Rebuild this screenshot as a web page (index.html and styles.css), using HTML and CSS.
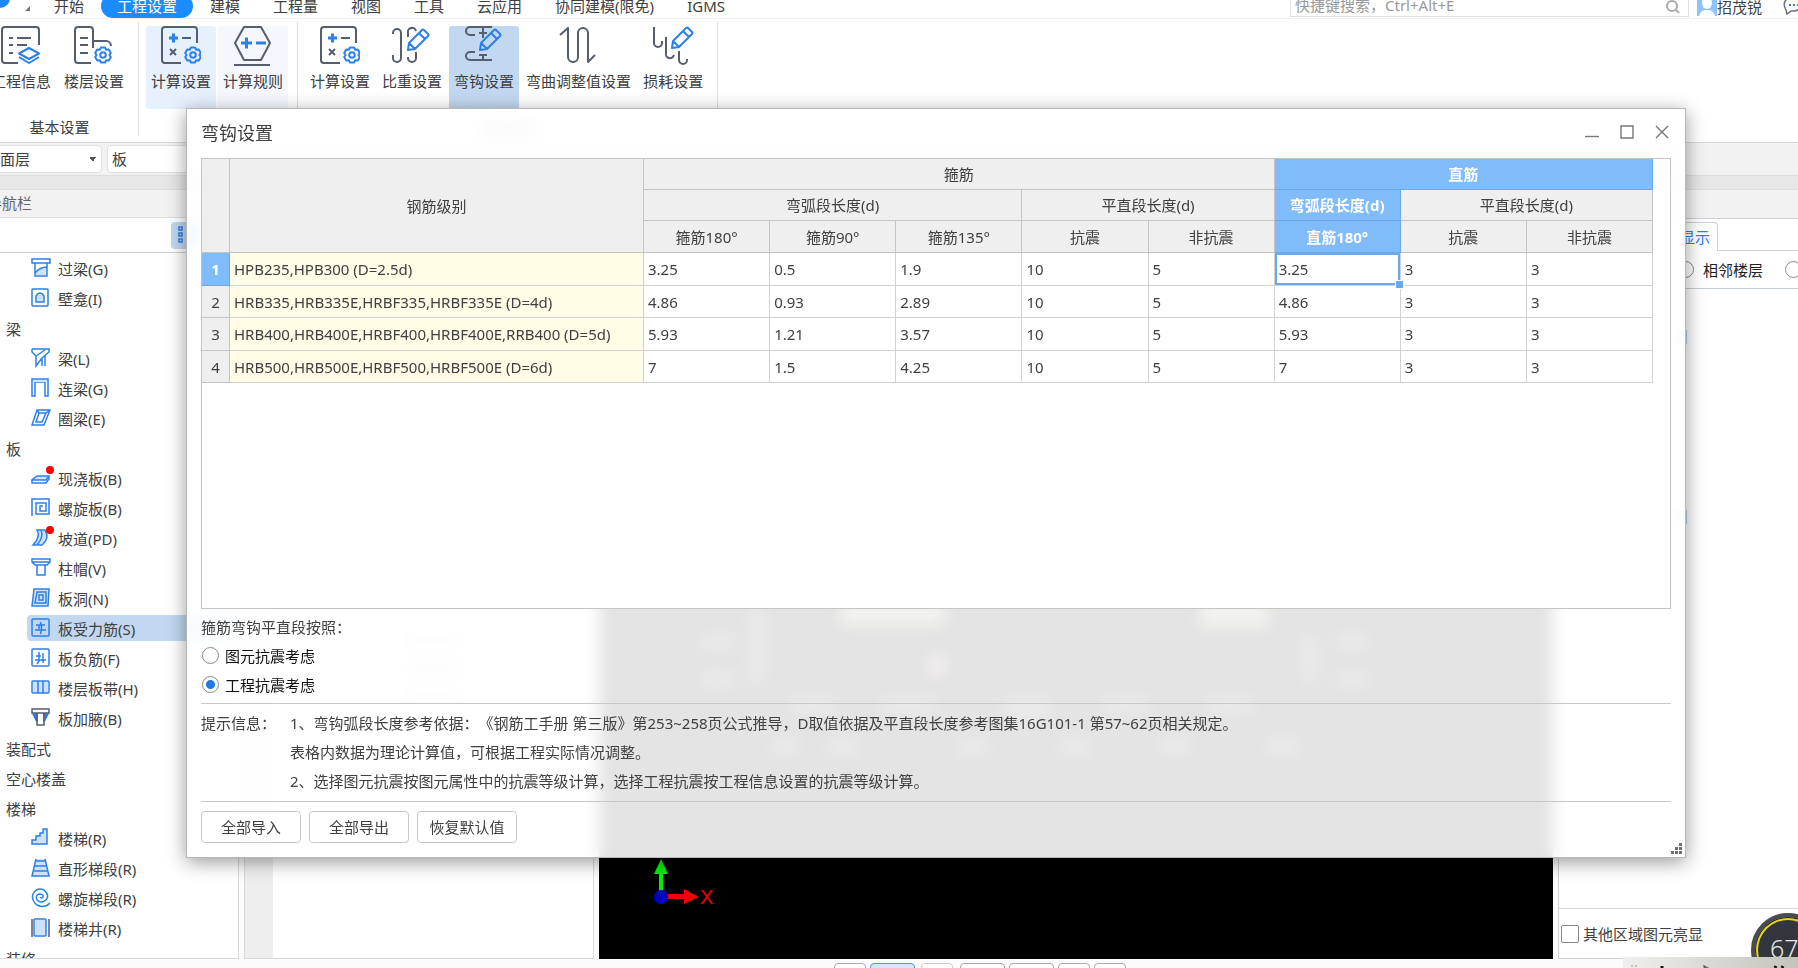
FILE: index.html
```html
<!DOCTYPE html>
<html lang="zh-CN">
<head>
<meta charset="utf-8">
<title>弯钩设置</title>
<link rel="stylesheet" href="styles.css">
</head>
<body>
<svg class="defs" aria-hidden="true">
  <symbol id="gear" viewBox="-9 -9 18 18"><path d="M-2-7.5h4l1.2 2.3 2.6-.2 2 3.4-1.4 2 1.4 2-2 3.4-2.6-.2-1.2 2.3h-4l-1.2-2.3-2.6.2-2-3.4 1.4-2-1.4-2 2-3.4 2.6.2z"/><circle r="2.8"/></symbol>
  <symbol id="pencil" viewBox="0 0 24 24"><path d="M2 22l1-7L16 2q1-1 2 0l4 4q1 1 0 2L9 21zM13 5l6 6M3 15l6 6"/></symbol>
  <symbol id="calc" viewBox="0 0 40 40"><path class="k" d="M36 17V4a3 3 0 0 0-3-3H4a3 3 0 0 0-3 3v30a3 3 0 0 0 3 3h16M21 12h9M9 23l6 6M15 23l-6 6"/><path class="b thick" d="M8 12h9M12.500 7.500v9"/><use class="b" href="#gear" x="23" y="20" width="18" height="18"/></symbol>
</svg>
<div class="app">
  <header class="tabbar">
    <span class="logo"></span><span class="tri"></span>
    <nav class="tabs">
      <a href="#">开始</a><a href="#" class="on">工程设置</a><a href="#">建模</a><a href="#">工程量</a><a href="#">视图</a><a href="#">工具</a><a href="#">云应用</a><a href="#">协同建模(限免)</a><a href="#">IGMS</a>
    </nav>
    <div class="search">
      <input type="text" aria-label="搜索" placeholder="快捷键搜索，Ctrl+Alt+E">
      <svg width="14" height="14" viewBox="0 0 14 14"><circle cx="6" cy="6" r="5"/><path d="M10 10l3 3"/></svg>
    </div>
    <div class="user">
      <svg width="20" height="20" viewBox="0 0 20 20"><rect width="20" height="20" fill="#8fc3fb"/><ellipse cx="10" cy="7" rx="5" ry="6" fill="#fff"/><path d="M2 20q1-5 6-6h4q5 1 6 6z" fill="#fff"/></svg><span>招茂锐</span>
    </div>
    <svg class="chat" width="20" height="20" viewBox="0 0 20 20"><path d="M3 15q-4-7 1-11 7-5 14 1 3 8-6 11H8l-4 3z" fill="none" stroke="#6a7080" stroke-width="1.500"/><path d="M6 10h2M10 10h2M14 10h2" stroke="#4b78c8" stroke-width="2"/></svg>
  </header>

  <section class="ribbon">
    <div class="group first">
      <div class="btns">
        <button><svg class="ic" viewBox="0 0 40 40"><path class="k" d="M38 19V4a3 3 0 0 0-3-3H4a3 3 0 0 0-3 3v30a3 3 0 0 0 3 3h13M8 12h4M16 12h14M8 19h4M16 19h10M8 27h4"/><path class="b" d="M28 22l10 5.500-10 5.500-10-5.500zM18 31l10 6 10-6"/></svg>工程信息</button>
        <button><svg class="ic" viewBox="0 0 40 40"><path class="k" d="M17 37H4a3 3 0 0 1-3-3V4a3 3 0 0 1 3-3h12a3 3 0 0 1 3 3v18M19 15h13a5 5 0 0 1 5 5M6 12h8M6 19h8M6 27h8"/><use class="b" href="#gear" x="20" y="20" width="18" height="18"/></svg>楼层设置</button>
      </div>
      <div class="caption">基本设置</div>
    </div>
    <div class="group">
      <div class="btns">
        <button class="soft"><svg class="ic"><use href="#calc"/></svg>计算设置</button>
        <button class="softer"><svg class="ic" viewBox="0 0 40 40"><path class="k" d="M11 1h17l9 16-9 17H11L2 17zM1 39h36"/><path class="b thick" d="M8 17h11M13.500 11.500v11M23 17h10"/></svg>计算规则</button>
      </div>
    </div>
    <div class="group">
      <div class="btns">
        <button><svg class="ic"><use href="#calc"/></svg>计算设置</button>
        <button><svg class="ic" viewBox="0 0 40 40"><path class="k" d="M1 8V7a4 4 0 0 1 8 0v25a4 4 0 0 1-8 0v-3M16 11V7a4 4 0 0 1 8-2M24 26v6a4 4 0 0 1-8 0v-1"/><use class="b" href="#pencil" x="14" y="2" width="24" height="24"/></svg>比重设置</button>
        <button class="on"><svg class="ic" viewBox="0 0 40 40"><path class="k" d="M28 1H6a4 4 0 0 0 0 8h5M28 34H6a4 4 0 0 1 0-8h5M19 1v11M15 7h8M19 34v-5M15 29h8"/><use class="b" href="#pencil" x="14" y="2" width="24" height="24"/></svg>弯钩设置</button>
        <button><svg class="ic" viewBox="0 0 40 40"><path class="k" d="M1 9l8-7v29a5 5 0 0 0 10 0V7a5 5 0 0 1 10 0v29l7-7"/></svg>弯曲调整值设置</button>
        <button><svg class="ic" viewBox="0 0 40 40"><path class="k" d="M1 1v16a4 4 0 0 0 8 0v-2M13 11v16a4 4 0 0 0 8 2M26 25v9a4 4 0 0 0 8 0v-1"/><use class="b" href="#pencil" x="17" y="0" width="24" height="24"/></svg>损耗设置</button>
      </div>
      <div class="smudge"></div>
    </div>
  </section>

  <section class="toolbar">
    <select class="sel floor" aria-label="楼层"><option>屋面层</option></select>
    <select class="sel kind" aria-label="构件类型"><option>板</option></select>
  </section>
  <div class="strip"></div>

  <main class="work">
    <aside class="nav">
      <h2 class="navhead">导航栏</h2>
      <div class="navtools"><button class="viewbtn" aria-label="列表"><svg width="24" height="18" viewBox="0 0 24 18"><path d="M1 1h3v3H1zM1 7h3v3H1zM1 13h3v3H1zM8 2.500h12M8 8.500h12M8 14.500h12" fill="none" stroke="#2b80ea" stroke-width="1.500"/></svg></button></div>
      <ul class="list">
        <li><svg viewBox="0 0 20 20"><path class="f" d="M4 16q5-7 12-7v8H4z"/><path d="M1 1h18v4H1zM4 5v13h12V5M4 15q5-6 12-6"/></svg>过梁(G)</li>
        <li><svg viewBox="0 0 20 20"><rect x="1" y="1" width="16" height="17" rx="1"/><path class="f" d="M5 14V8q4-6 8 0v6z"/><path d="M5 14V8q4-6 8 0v6z"/></svg>壁龛(I)</li>
        <li class="cat">梁</li>
        <li><svg viewBox="0 0 20 20"><path d="M1 1h17v3l-7 6v8M1 1v3l4 4v10l6-8M5 8l9-6M14 8v10"/></svg>梁(L)</li>
        <li><svg viewBox="0 0 20 20"><path d="M1 18V1h16v17h-3V4H4v14z"/><path class="f" d="M2 2h14v2H2z"/></svg>连梁(G)</li>
        <li><svg viewBox="0 0 20 20"><path d="M6 2h13l-6 15H1zM8 5h7l-4 9H5zM6 2l2 3M19 2l-4 3"/></svg>圈梁(E)</li>
        <li class="cat">板</li>
        <li class="dot"><svg viewBox="0 0 20 20"><path class="f" d="M6 8h12l-3 4H1z"/><path d="M6 8h12l-3 4H1zM1 12v3h14l3-4V8"/></svg>现浇板(B)</li>
        <li><svg viewBox="0 0 20 20"><path d="M1 18V1h17v15H5V5h10v8H9V8h3"/></svg>螺旋板(B)</li>
        <li class="dot"><svg viewBox="0 0 20 20"><path class="f" d="M6 2h9q4 8-3 15H2q7-8 4-15z"/><path d="M6 2q4 7-4 15h4q7-8 4-15zM10 2h4q5 8-3 15H7"/></svg>坡道(PD)</li>
        <li><svg viewBox="0 0 20 20"><path d="M1 1h18v3l-3 3H4L1 4zM1 4h18M6 7h8v10H6z"/></svg>柱帽(V)</li>
        <li><svg viewBox="0 0 20 20"><path class="f" d="M3 1h15l-1 16H1z"/><path d="M3 1h15l-1 17H1zM6 4h9v11H4zM8 7h4v5H8z"/></svg>板洞(N)</li>
        <li class="sel-row"><svg viewBox="0 0 20 20"><rect x="1" y="1" width="17" height="17" rx="1"/><path d="M5 7h9M4 12h11M8 7v5M9.500 4q2 6 0 12"/></svg>板受力筋(S)</li>
        <li><svg viewBox="0 0 20 20"><rect x="1" y="1" width="17" height="17" rx="1"/><path d="M5 8h5M4 12h11M8 4v9l-2 3M12 5v10"/></svg>板负筋(F)</li>
        <li><svg viewBox="0 0 20 20"><rect class="f" x="2" y="4" width="15" height="11"/><rect x="1" y="3" width="17" height="12" rx="1"/><path d="M7 3v12M12 3v12"/></svg>楼层板带(H)</li>
        <li><svg viewBox="0 0 20 20"><path fill="#2b80ea" d="M2 6h4v8zM17 6h-4v8z"/><path class="g" d="M1 1h17v4H1zM6 5h7v12H6z"/></svg>板加腋(B)</li>
        <li class="cat">装配式</li>
        <li class="cat">空心楼盖</li>
        <li class="cat">楼梯</li>
        <li><svg viewBox="0 0 20 20"><path class="f" d="M1 16v-4h4V8h4V5h3V1h4v15z"/><path d="M1 16v-4h4V8h4V5h3V1h4v15z"/></svg>楼梯(R)</li>
        <li><svg viewBox="0 0 20 20"><path class="f" d="M5 1h9l4 17H1z"/><path d="M5 1L1 18h17L14 1M5 3h10M4 8h11M3 13h13"/></svg>直形梯段(R)</li>
        <li><svg viewBox="0 0 20 20"><path d="M19 15q-6 6-13 2-6-5-4-11 4-7 11-4 6 5 2 10-5 4-9 0-2-5 2-6 5 0 4 3-2 2-3 0"/></svg>螺旋梯段(R)</li>
        <li><svg viewBox="0 0 20 20"><rect class="f" x="4" y="2" width="11" height="15"/><rect x="3" y="1" width="12" height="17" rx="1"/><path class="g" d="M1 1v18M18 1v18"/></svg>楼梯井(R)</li>
        <li class="cat">装修</li>
      </ul>
    </aside>
    <section class="props"><div class="gutter"></div><div class="propbody"><i></i><i></i><i></i></div></section>
    <section class="canvas">
      <svg class="scene" width="956" height="360" viewBox="599 599 956 360">
        <g fill="#8c8c78"><rect x="840" y="599" width="105" height="26"/><rect x="1200" y="599" width="68" height="28"/></g>
        <rect x="930" y="655" width="14" height="20" fill="#c080a0"/>
        <g fill="#484848"><rect x="700" y="635" width="34" height="14"/><rect x="700" y="672" width="34" height="14"/><rect x="750" y="605" width="14" height="80"/><rect x="1303" y="635" width="14" height="48"/><rect x="1336" y="635" width="32" height="14"/><rect x="1336" y="672" width="32" height="14"/>
        <rect x="790" y="698" width="46" height="14"/><rect x="880" y="698" width="56" height="14"/><rect x="1005" y="698" width="44" height="22"/><rect x="1102" y="698" width="48" height="14"/><rect x="1206" y="698" width="48" height="14"/>
        <rect x="772" y="738" width="26" height="16"/><rect x="828" y="738" width="30" height="16"/><rect x="958" y="738" width="30" height="16"/><rect x="1060" y="738" width="30" height="16"/><rect x="1160" y="738" width="30" height="16"/><rect x="1267" y="738" width="32" height="16"/></g>
        <path d="M659 891v-17h-5l7-15 7 15h-5v17z" fill="#00f000"/>
        <path d="M667 894h17v-5l15 8-15 7v-5h-17z" fill="#f00000"/>
        <circle cx="661" cy="897" r="7" fill="#0000c0"/>
        <text x="700" y="904" fill="#f00000">X</text>
      </svg>
    </section>
    <aside class="side">
      <div class="sidetabs"><span>显示</span></div>
      <div class="sideopts"><label><input type="radio" name="fl" class="radio">相邻楼层</label><label><input type="radio" name="fl" class="radio" aria-label="全部楼层"></label></div>
      <div class="sidebody"><i></i><i></i></div>
      <label class="sidefoot"><input type="checkbox" class="check">其他区域图元亮显</label>
    </aside>
  </main>
  <footer class="status"><button></button><button class="w on"></button><button class="dim"></button><button class="w"></button><button class="w"></button><button></button><button></button></footer>

  <div class="gauge">67</div>
  <div class="peek"><svg width="175" height="11" viewBox="0 0 175 11"><path d="M8 9h2M12 9h2M80 8l6 3h-5z" fill="#222" stroke="#999"/><path d="M39 9v2M153 9l-1 2M160 9l-1 2" stroke="#111" stroke-width="3"/></svg></div>

  <div class="dialog" role="dialog" aria-labelledby="dlg">
    <div class="titlebar">
      <h1 id="dlg">弯钩设置</h1>
      <div class="winbtns">
        <button aria-label="最小化"><svg viewBox="0 0 14 14"><path d="M0 11.500h14"/></svg></button>
        <button aria-label="最大化"><svg viewBox="0 0 14 14"><path d="M1 1h12v12H1z"/></svg></button>
        <button aria-label="关闭"><svg viewBox="0 0 14 14"><path d="M1 1l12 12M13 1L1 13"/></svg></button>
      </div>
    </div>
    <div class="frame">
      <table class="grid">
        <colgroup><col class="c-no"><col class="c-name"><col span="8"></colgroup>
        <thead>
          <tr><th rowspan="3"></th><th rowspan="3">钢筋级别</th><th colspan="5">箍筋</th><th colspan="3" class="hot">直筋</th></tr>
          <tr><th colspan="3">弯弧段长度(d)</th><th colspan="2">平直段长度(d)</th><th class="hot">弯弧段长度(d)</th><th colspan="2">平直段长度(d)</th></tr>
          <tr><th>箍筋180°</th><th>箍筋90°</th><th>箍筋135°</th><th>抗震</th><th>非抗震</th><th class="hot">直筋180°</th><th>抗震</th><th>非抗震</th></tr>
        </thead>
        <tbody>
          <tr><th class="hot">1</th><td>HPB235,HPB300 (D=2.5d)</td><td>3.25</td><td>0.5</td><td>1.9</td><td>10</td><td>5</td><td class="active">3.25</td><td>3</td><td>3</td></tr>
          <tr><th>2</th><td>HRB335,HRB335E,HRBF335,HRBF335E (D=4d)</td><td>4.86</td><td>0.93</td><td>2.89</td><td>10</td><td>5</td><td>4.86</td><td>3</td><td>3</td></tr>
          <tr><th>3</th><td>HRB400,HRB400E,HRBF400,HRBF400E,RRB400 (D=5d)</td><td>5.93</td><td>1.21</td><td>3.57</td><td>10</td><td>5</td><td>5.93</td><td>3</td><td>3</td></tr>
          <tr><th>4</th><td>HRB500,HRB500E,HRBF500,HRBF500E (D=6d)</td><td>7</td><td>1.5</td><td>4.25</td><td>10</td><td>5</td><td>7</td><td>3</td><td>3</td></tr>
        </tbody>
      </table>
    </div>
    <div class="options" role="radiogroup" aria-labelledby="optl">
      <div id="optl">箍筋弯钩平直段按照：</div>
      <label><input type="radio" name="seis" class="radio">图元抗震考虑</label>
      <label><input type="radio" name="seis" class="radio" checked>工程抗震考虑</label>
    </div>
    <div class="hint">
      <div>提示信息：</div>
      <div>
        <p>1、弯钩弧段长度参考依据：《钢筋工手册 第三版》第253~258页公式推导，D取值依据及平直段长度参考图集16G101-1 第57~62页相关规定。</p>
        <p>表格内数据为理论计算值，可根据工程实际情况调整。</p>
        <p>2、选择图元抗震按图元属性中的抗震等级计算，选择工程抗震按工程信息设置的抗震等级计算。</p>
      </div>
    </div>
    <div class="actions"><button>全部导入</button><button>全部导出</button><button>恢复默认值</button></div>
    <svg class="grip" width="11" height="11" viewBox="0 0 11 11"><path d="M8 0h3v3H8zM4 4h3v3H4zM8 4h3v3H8zM0 8h3v3H0zM4 8h3v3H4zM8 8h3v3H8z" fill="#6a6e76"/></svg>
  </div>
</div>
</body>
</html>
```
FILE: styles.css
```css
* { box-sizing: border-box; }
html, body { margin: 0; height: 100%; overflow: hidden; }
body, button, input, select {
  font-family: "Noto Sans", "Noto Sans CJK SC", sans-serif;
  font-size: 15px;
  color: #404040;
  text-spacing-trim: space-all;
}
button { background: none; border: 0; padding: 0; margin: 0; }
h1, h2, p, ul { margin: 0; padding: 0; font-weight: normal; }
a { color: inherit; text-decoration: none; }
.defs { position: absolute; width: 0; height: 0; }

.app { position: relative; height: 100vh; display: flex; flex-direction: column; overflow: hidden; background: #fbfbfb; }

/* tab bar */
.tabbar { flex: none; height: 19px; display: flex; align-items: flex-end; background: #fff; border-bottom: 1px solid #f0f0f0; }
.logo { width: 20px; height: 20px; margin-left: -10px; margin-bottom: 10px; border-radius: 10px; background: #1e88f5; }
.tri { width: 0; height: 0; margin: 0 8px 7px 15px; border-left: 5px solid transparent; border-bottom: 5px solid #777; }
.tabs { display: flex; gap: 1px; }
.tabs a { height: 24px; line-height: 24px; padding: 0 16px; white-space: nowrap; }
.tabs .on { background: #1a8cff; color: #fff; border-radius: 12px; }
.search { margin-left: auto; width: 399px; height: 24px; display: flex; align-items: center; padding: 0 8px 0 4px; margin-bottom: 1px; border: 1px solid #e2e2e2; }
.search input { flex: 1; border: 0; padding: 0; background: none; outline: 0; }
.search input::placeholder { color: #999; opacity: 1; }
.search svg { fill: none; stroke: #aaa; stroke-width: 2; margin-top: 4px; }
.user { display: flex; align-items: center; height: 24px; width: 86px; margin-left: 8px; white-space: nowrap; }
.chat { flex: none; margin-right: -5px; margin-bottom: 3px; }

/* ribbon */
.ribbon { flex: none; height: 124px; display: flex; background: #fff; border-bottom: 1px solid #d8d8d8; padding: 3px 0 6px; }
.group { border-right: 1px solid #ddd; padding: 4px 9px 0 7px; display: flex; flex-direction: column; justify-content: space-between; }
.group.first { margin-left: -14px; padding-left: 0; }
.btns { display: flex; gap: 2px; }
.first .btns { gap: 3px; }
.btns button { min-width: 70px; height: 83px; padding: 0 5px; border-radius: 3px; display: flex; flex-direction: column; align-items: center; gap: 4px; line-height: 22px; white-space: nowrap; }
.btns .soft { background: #e6f1fd; }
.btns .softer { background: #f4f8fe; }
.btns .on { background: #c2d8f0; }
.ic { width: 40px; height: 40px; overflow: visible; }
.k, .b { fill: none; stroke: #555e6e; stroke-width: 2; stroke-linejoin: round; }
.b { stroke: #2b80ea; }
.thick { stroke-width: 3; }
.caption { text-align: center; line-height: 18px; padding-left: 4px; }
.smudge { width: 56px; height: 12px; margin: 0 0 2px 177px; background: #c0c0c0; }

.toolbar { flex: none; height: 33px; display: flex; gap: 5px; padding: 2px 0 3px; background: #f2f2f2; border-bottom: 1px solid #ddd; }
.sel { appearance: none; background: #fff; border: 1px solid #e0e0e0; border-radius: 4px; height: 28px; padding: 0 4px; line-height: 24px; }
.floor { width: 122px; margin-left: -20px; background: #fff conic-gradient(from 315deg at 50% 100%, #555 90deg, transparent 0) no-repeat 109px 11px / 6px 4px; }
.kind { width: 120px; }
.strip { flex: none; height: 14px; background: #e7e7e7; border-bottom: 1px solid #ddd; }

/* work area */
.work { flex: 1; min-height: 0; display: flex; background: linear-gradient(#f2f2f2 28px, #fbfbfb 28px); }
.nav { width: 239px; flex: none; border-right: 1px solid #d8d8d8; border-bottom: 1px solid #d8d8d8; background: #fff; overflow: hidden; display: flex; flex-direction: column; }
.navhead { flex: none; height: 28px; line-height: 27px; font-size: 15px; color: #666; background: #f2f2f2; border-bottom: 1px solid #ddd; text-indent: -13px; }
.navtools { flex: none; height: 35px; border-bottom: 1px solid #d0d0d0; padding: 4px 0 0 171px; }
.viewbtn { width: 34px; height: 27px; border-radius: 4px; background: #c2d8f0; padding: 3px 0 0 4px; }
.list { list-style: none; padding-top: 2px; }
.list li { position: relative; display: flex; align-items: center; gap: 7px; height: 26px; margin: 0 0 4px 27px; padding-left: 4px; white-space: nowrap; }
.list li.cat { margin-left: 2px; }
.list li.sel-row { background: #c2d8f0; border-radius: 4px 0 0 4px; }
.list svg { width: 20px; height: 20px; fill: none; stroke: #2b80ea; stroke-width: 1.5; }
.list .f { fill: #cfe2fb; stroke: none; }
.list .g { stroke: #555e6e; }
.list .dot::before { content: ""; position: absolute; left: 19px; top: 1px; width: 8px; height: 8px; border-radius: 4px; background: #f00; }
.props { width: 350px; flex: none; margin: 28px 5px 0 5px; display: flex; background: #fff; border: 1px solid #d8d8d8; }
.gutter { width: 28px; background: #eee; }
.propbody { padding: 415px 0 0 130px; display: flex; flex-direction: column; gap: 16px; }
.propbody i { width: 60px; height: 12px; background: #ddd; }
.canvas { flex: 1; position: relative; margin-top: 28px; background: #000; overflow: hidden; }
.scene { position: absolute; left: 0; bottom: 0; font: 20px "Liberation Sans", sans-serif; }
.side { width: 240px; flex: none; margin: 28px 0 0 5px; display: flex; flex-direction: column; background: #fff; border: 1px solid #ccd0d4; border-right: 0; overflow: hidden; }
.sidetabs { flex: none; height: 32px; padding: 3px 0 0 90px; border-bottom: 1px solid #ccd0d4; }
.sidetabs span { display: block; width: 69px; height: 29px; line-height: 28px; background: #fff; border: 1px solid #ccd0d4; border-bottom-color: #fff; border-radius: 4px 4px 0 0; color: #2b80ea; text-align: right; padding-right: 7px; }
.sideopts { flex: none; height: 38px; padding-left: 118px; display: flex; gap: 22px; border-bottom: 1px solid #c4ccd4; white-space: nowrap; }
.sideopts label, .options label { display: flex; align-items: center; gap: 6px; color: #222; }
.sideopts label { gap: 9px; }
.sidebody { flex: 1; border-bottom: 1px solid #d4d8dc; padding: 41px 0 0 115px; display: flex; flex-direction: column; gap: 166px; }
.sidebody i { width: 13px; height: 14px; background: #b4cdea; }
.sidefoot { flex: none; height: 49px; padding-left: 2px; display: flex; align-items: center; gap: 4px; white-space: nowrap; }
.radio, .check { appearance: none; flex: none; margin: 0; width: 17px; height: 17px; border: 1px solid #888; border-radius: 9px; background: #fff; }
.radio:checked { background: radial-gradient(circle, #1f7ae6 4px, #fff 5px); }
.check { width: 18px; height: 18px; border-radius: 2px; }

.status { flex: none; height: 9px; padding: 4px 0 0 834px; display: flex; gap: 4px; background: #fbfbfb; }
.status button { flex: none; width: 32px; height: 24px; border: 1px solid #aaa; border-radius: 4px; background: #fff; }
.status .w { width: 45px; }
.status .on { background: #d6e8fc; border-color: #4a98f0; margin-right: 2px; }
.status .dim { border-color: #ccc; margin-right: 3px; }

.gauge { position: absolute; right: -27px; bottom: -19px; width: 74px; height: 74px; border-radius: 37px; background: #34363e; border: 4px solid #4a4c54; box-shadow: inset 0 0 0 1px #222, inset 0 0 0 3px #e8d81c; color: #e8e8e8; font-size: 25px; font-weight: 300; line-height: 62px; text-indent: 15px; }
.peek { position: absolute; right: 0; bottom: 0; width: 175px; height: 11px; background: linear-gradient(90deg, #efefed, #c4c4bc); }
.peek svg { display: block; }

/* dialog */
.dialog { position: absolute; top: 108px; left: 186px; right: 112px; bottom: 110px; display: flex; flex-direction: column; padding: 0 14px 14px; border: 1px solid #b8b8b8; background: rgba(255, 255, 255, .894); backdrop-filter: blur(8px); box-shadow: 0 4px 18px rgba(0, 0, 0, .4); }
.titlebar { flex: none; height: 49px; display: flex; justify-content: space-between; align-items: center; padding-bottom: 3px; }
.titlebar h1 { font-size: 18px; }
.winbtns { display: flex; gap: 21px; padding-right: 2px; }
.winbtns button { width: 14px; height: 14px; }
.winbtns svg { display: block; width: 14px; height: 14px; fill: none; stroke: #777; stroke-width: 1.4; }
.frame { flex: 1; min-height: 0; border: 1px solid #c4c4c4; background: #fff; }
.grid { width: calc(100% - 17px); table-layout: fixed; border-collapse: separate; border-spacing: 0; line-height: 20px; }
.c-no { width: 28px; }
.c-name { width: 414px; }
.grid th, .grid td { padding: 0 4px; border: solid #d2d2d2; border-width: 0 1px 1px 0; white-space: nowrap; font-weight: normal; }
.grid th { background: #efefef; border-color: #c4c4c4; text-align: center; }
.grid thead tr { height: 31px; }
.grid thead tr:last-child { height: 32px; }
.grid tbody tr { height: 32px; }
.grid tbody tr:nth-child(odd) { height: 33px; }
.grid td:nth-child(2) { background: #fffde6; }
.grid .hot { background: #80bbfa; border-color: #69a9ec; color: #fff; font-weight: bold; }
.grid .active { position: relative; box-shadow: inset 0 0 0 2px #69a9ec; }
.grid .active::after { content: ""; position: absolute; right: -4px; bottom: -4px; width: 7px; height: 7px; background: #69a9ec; border: 1px solid #fff; }
.options { flex: none; padding: 4px 0; border-bottom: 1px solid #c8c8c8; line-height: 28px; }
.options label { width: fit-content; height: 29px; padding-left: 1px; color: #111; }
.hint { flex: none; display: grid; grid-template-columns: 89px 1fr; padding: 5px 0; border-bottom: 1px solid #c8c8c8; line-height: 29px; white-space: nowrap; }
.actions { flex: none; display: flex; gap: 8px; padding-top: 9px; }
.actions button { min-width: 100px; height: 32px; padding-bottom: 2px; background: #fff; border: 1px solid #c8c8c8; border-radius: 4px; }
.grip { position: absolute; right: 3px; bottom: 3px; }
```
